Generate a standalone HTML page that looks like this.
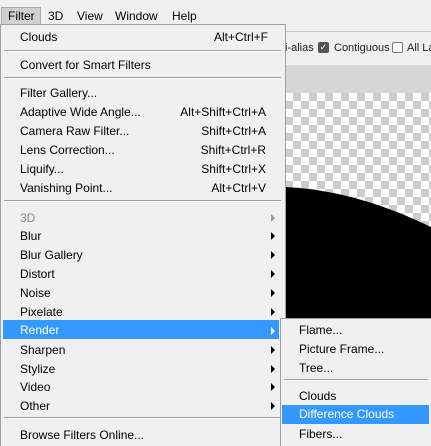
<!DOCTYPE html><html><head><style>
body{margin:0;width:431px;height:445px;overflow:hidden;background:#f0f0f0;font-family:"Liberation Sans",sans-serif;font-size:12px;color:#000;position:relative}
.a{position:absolute}
.t{position:absolute;white-space:nowrap;line-height:19px;height:19px;padding-top:1px}
.sc{position:absolute;right:19px;white-space:nowrap}
.arr{position:absolute;left:271px;width:0;height:0;border-top:4px solid transparent;border-bottom:4px solid transparent;border-left:4px solid #000;margin-top:6px}
.sep{position:absolute;height:1px;background:#a0a0a0;border-bottom:1px solid #fff}
</style></head><body>
<div class="a" style="left:0;top:0;width:431px;height:31px;background:#f0f0f0"></div>
<div class="a" style="left:1px;top:7px;width:38px;height:16px;background:#d0d0d0;border:1px solid #a8a8a8;border-bottom:none"></div>
<div class="t" style="left:8px;top:6px">Filter</div>
<div class="t" style="left:48px;top:6px">3D</div>
<div class="t" style="left:77px;top:6px">View</div>
<div class="t" style="left:115px;top:6px">Window</div>
<div class="t" style="left:172px;top:6px">Help</div>
<div class="a" style="left:285px;top:31px;width:146px;height:1px;background:#c8c8c8"></div>
<div class="a" style="left:285px;top:65px;width:146px;height:28px;background:#d6d6d6"></div>
<div class="t" style="left:285px;top:38px;font-size:11px;color:#222">i-alias</div>
<div class="a" style="left:318px;top:42px;width:11px;height:11px;background:#555;border-radius:2px;color:#fff;font-size:9px;line-height:11px;text-align:center">✓</div>
<div class="t" style="left:334px;top:38px;font-size:11px;color:#222">Contiguous</div>
<div class="a" style="left:392px;top:42px;width:9px;height:9px;border:1px solid #777;border-radius:2px;background:#fff"></div>
<div class="t" style="left:407px;top:38px;font-size:11px;color:#222">All La</div>
<div class="a" style="left:285px;top:93px;width:146px;height:352px;background-color:#fff;background-image:linear-gradient(45deg,#ccc 25%,transparent 25%,transparent 75%,#ccc 75%),linear-gradient(45deg,#ccc 25%,transparent 25%,transparent 75%,#ccc 75%);background-size:16px 16px;background-position:0 0,8px 8px"></div>
<svg class="a" style="left:285px;top:180px" width="146" height="265"><path d="M0 7 Q70 10 146 47 L146 265 L0 265Z" fill="#000"/></svg>
<div class="a" style="left:0;top:24px;width:284px;height:421px;background:#f0f0f0;border-right:1px solid #a0a0a0;border-left:1px solid #a0a0a0;border-top:1px solid #a0a0a0"></div>
<div class="t" style="left:20px;top:27px;width:248px">Clouds<span class="sc" style="right:0">Alt+Ctrl+F</span></div>
<div class="sep" style="left:4px;top:50px;width:277px"></div>
<div class="t" style="left:20px;top:55px">Convert for Smart Filters</div>
<div class="sep" style="left:4px;top:77px;width:277px"></div>
<div class="t" style="left:20px;top:83px">Filter Gallery...</div>
<div class="t" style="left:20px;top:102px;width:246px">Adaptive Wide Angle...<span class="sc" style="right:0">Alt+Shift+Ctrl+A</span></div>
<div class="t" style="left:20px;top:121px;width:246px">Camera Raw Filter...<span class="sc" style="right:0">Shift+Ctrl+A</span></div>
<div class="t" style="left:20px;top:140px;width:246px">Lens Correction...<span class="sc" style="right:0">Shift+Ctrl+R</span></div>
<div class="t" style="left:20px;top:159px;width:246px">Liquify...<span class="sc" style="right:0">Shift+Ctrl+X</span></div>
<div class="t" style="left:20px;top:178px;width:246px">Vanishing Point...<span class="sc" style="right:0">Alt+Ctrl+V</span></div>
<div class="sep" style="left:4px;top:200px;width:277px"></div>
<div class="t" style="left:20px;top:208px;color:#8a8a8a">3D</div><div class="arr" style="top:208px;border-left-color:#999"></div>
<div class="t" style="left:20px;top:226px">Blur</div><div class="arr" style="top:226px"></div>
<div class="t" style="left:20px;top:245px">Blur Gallery</div><div class="arr" style="top:245px"></div>
<div class="t" style="left:20px;top:264px">Distort</div><div class="arr" style="top:264px"></div>
<div class="t" style="left:20px;top:283px">Noise</div><div class="arr" style="top:283px"></div>
<div class="t" style="left:20px;top:302px">Pixelate</div><div class="arr" style="top:302px"></div>
<div class="a" style="left:3px;top:320px;width:276px;height:19px;background:#3399ff"></div>
<div class="t" style="left:20px;top:320px;color:#fff">Render</div><div class="arr" style="top:321px;border-left-color:#fff"></div>
<div class="t" style="left:20px;top:340px">Sharpen</div><div class="arr" style="top:340px"></div>
<div class="t" style="left:20px;top:359px">Stylize</div><div class="arr" style="top:359px"></div>
<div class="t" style="left:20px;top:377px">Video</div><div class="arr" style="top:377px"></div>
<div class="t" style="left:20px;top:396px">Other</div><div class="arr" style="top:396px"></div>
<div class="sep" style="left:4px;top:417px;width:277px"></div>
<div class="t" style="left:20px;top:425px">Browse Filters Online...</div>
<div class="a" style="left:280px;top:318px;width:151px;height:127px;background:#f0f0f0;border-left:1px solid #a0a0a0;border-top:1px solid #a0a0a0"></div>
<div class="t" style="left:299px;top:320px">Flame...</div>
<div class="t" style="left:299px;top:339px">Picture Frame...</div>
<div class="t" style="left:299px;top:358px">Tree...</div>
<div class="sep" style="left:284px;top:379px;width:144px"></div>
<div class="t" style="left:299px;top:386px">Clouds</div>
<div class="a" style="left:282px;top:405px;width:147px;height:19px;background:#3399ff"></div>
<div class="t" style="left:299px;top:404px;color:#fff">Difference Clouds</div>
<div class="t" style="left:299px;top:424px">Fibers...</div>
</body></html>
